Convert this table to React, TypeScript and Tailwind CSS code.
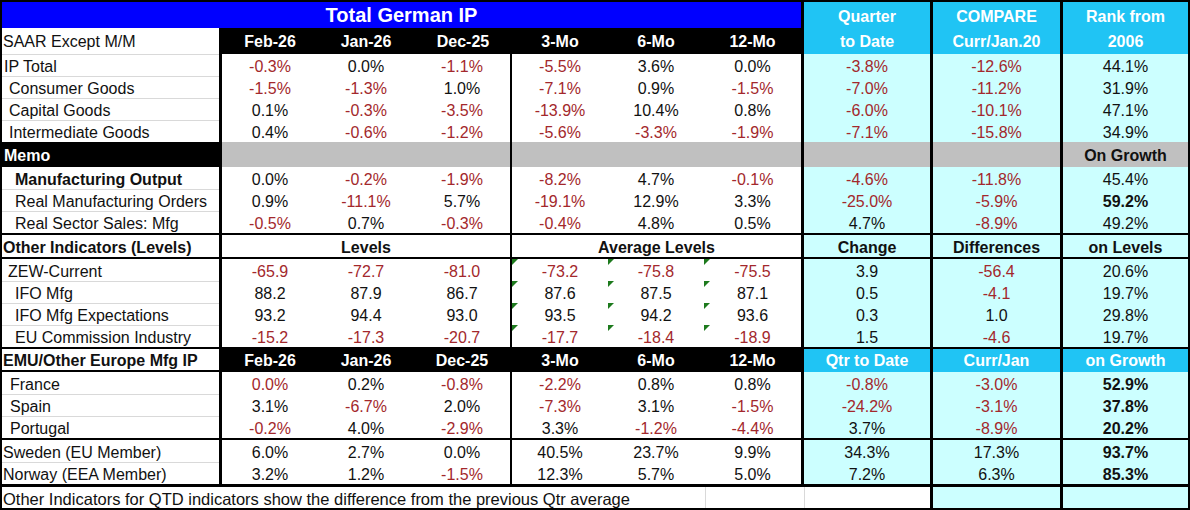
import React from 'react';

type Row = {
  label: string;
  indent: string;
  bold?: boolean;
  vals: string[];
  red?: number[];
  boldRank?: boolean;
  tri?: boolean;
  noTop?: boolean;
};

// column widths; the black rules between column groups are separate elements
const widths = ['w-[96px]', 'w-[96px]', 'w-[96px]', 'w-[96px]', 'w-[96px]', 'w-[97px]', 'w-[126px]', 'w-[127px]', 'w-[125px]'];

const ipRows: Row[] = [
  { label: 'IP Total', indent: 'pl-[2px]', vals: ['-0.3%', '0.0%', '-1.1%', '-5.5%', '3.6%', '0.0%', '-3.8%', '-12.6%', '44.1%'] },
  { label: 'Consumer Goods', indent: 'pl-[7px]', vals: ['-1.5%', '-1.3%', '1.0%', '-7.1%', '0.9%', '-1.5%', '-7.0%', '-11.2%', '31.9%'] },
  { label: 'Capital Goods', indent: 'pl-[7px]', vals: ['0.1%', '-0.3%', '-3.5%', '-13.9%', '10.4%', '0.8%', '-6.0%', '-10.1%', '47.1%'] },
  { label: 'Intermediate Goods', indent: 'pl-[7px]', vals: ['0.4%', '-0.6%', '-1.2%', '-5.6%', '-3.3%', '-1.9%', '-7.1%', '-15.8%', '34.9%'] },
];

const memoRows: Row[] = [
  { label: 'Manufacturing Output', indent: 'pl-[13px]', bold: true, noTop: true, vals: ['0.0%', '-0.2%', '-1.9%', '-8.2%', '4.7%', '-0.1%', '-4.6%', '-11.8%', '45.4%'] },
  { label: 'Real Manufacturing Orders', indent: 'pl-[13px]', boldRank: true, vals: ['0.9%', '-11.1%', '5.7%', '-19.1%', '12.9%', '3.3%', '-25.0%', '-5.9%', '59.2%'] },
  { label: 'Real Sector Sales: Mfg', indent: 'pl-[13px]', vals: ['-0.5%', '0.7%', '-0.3%', '-0.4%', '4.8%', '0.5%', '4.7%', '-8.9%', '49.2%'] },
];

const levelRows: Row[] = [
  { label: 'ZEW-Current', indent: 'pl-[6px]', tri: true, noTop: true, vals: ['-65.9', '-72.7', '-81.0', '-73.2', '-75.8', '-75.5', '3.9', '-56.4', '20.6%'] },
  { label: 'IFO Mfg', indent: 'pl-[13px]', tri: true, vals: ['88.2', '87.9', '86.7', '87.6', '87.5', '87.1', '0.5', '-4.1', '19.7%'] },
  { label: 'IFO Mfg Expectations', indent: 'pl-[13px]', tri: true, vals: ['93.2', '94.4', '93.0', '93.5', '94.2', '93.6', '0.3', '1.0', '29.8%'] },
  { label: 'EU Commission Industry', indent: 'pl-[13px]', tri: true, vals: ['-15.2', '-17.3', '-20.7', '-17.7', '-18.4', '-18.9', '1.5', '-4.6', '19.7%'] },
];

const emuRows: Row[] = [
  { label: 'France', indent: 'pl-[8px]', boldRank: true, noTop: true, red: [0], vals: ['0.0%', '0.2%', '-0.8%', '-2.2%', '0.8%', '0.8%', '-0.8%', '-3.0%', '52.9%'] },
  { label: 'Spain', indent: 'pl-[8px]', boldRank: true, vals: ['3.1%', '-6.7%', '2.0%', '-7.3%', '3.1%', '-1.5%', '-24.2%', '-3.1%', '37.8%'] },
  { label: 'Portugal', indent: 'pl-[8px]', boldRank: true, vals: ['-0.2%', '4.0%', '-2.9%', '3.3%', '-1.2%', '-4.4%', '3.7%', '-8.9%', '20.2%'] },
];

const otherRows: Row[] = [
  { label: 'Sweden (EU Member)', indent: 'pl-[1px]', boldRank: true, noTop: true, vals: ['6.0%', '2.7%', '0.0%', '40.5%', '23.7%', '9.9%', '34.3%', '17.3%', '93.7%'] },
  { label: 'Norway (EEA Member)', indent: 'pl-[1px]', boldRank: true, vals: ['3.2%', '1.2%', '-1.5%', '12.3%', '5.7%', '5.0%', '7.2%', '6.3%', '85.3%'] },
];

const Rule2 = () => <div className="w-[2px] shrink-0 bg-black" />;
const Rule3 = () => <div className="w-[3px] shrink-0 bg-black" />;

// puts the black rules after Dec-25, 12-Mo, QTD and COMPARE
function withRules(cells: React.ReactNode[]) {
  const out: React.ReactNode[] = [];
  cells.forEach((c, i) => {
    out.push(<React.Fragment key={`c${i}`}>{c}</React.Fragment>);
    if (i === 2) out.push(<Rule2 key={`r${i}`} />);
    if (i === 5 || i === 6 || i === 7) out.push(<Rule3 key={`r${i}`} />);
  });
  return out;
}

function DataRow({ row }: { row: Row }) {
  return (
    <div className="flex h-[22px]">
      <div
        className={`w-[217px] shrink-0 flex items-center pt-[3px] whitespace-nowrap ${
          row.noTop ? '' : 'shadow-[inset_0_1px_0_#d9d9d9]'
        } ${row.indent} ${row.bold ? 'font-bold' : ''}`}
      >
        {row.label}
      </div>
      <Rule3 />
      {withRules(
        row.vals.map((v, i) => {
          const red = v.startsWith('-') || (row.red ?? []).includes(i);
          const bold = i === 8 && row.boldRank;
          return (
            <div
              className={`${widths[i]} shrink-0 relative flex items-center justify-center pt-[3px] ${
                i >= 6 ? 'bg-[#ccffff]' : 'bg-white'
              } ${red ? 'text-[#a3282c]' : 'text-[#111]'} ${bold ? 'font-bold' : ''}`}
            >
              {row.tri && i >= 3 && i <= 5 && (
                <span className="absolute left-0 top-0 w-0 h-0 border-t-[6px] border-r-[6px] border-t-[#1d7a1d] border-r-transparent" />
              )}
              {v}
            </div>
          );
        })
      )}
    </div>
  );
}

const periods = ['Feb-26', 'Jan-26', 'Dec-25', '3-Mo', '6-Mo', '12-Mo'];

export default function App() {
  return (
    <div
      className="w-[1190px] h-[510px] bg-white border-2 border-black text-[16px] leading-none text-[#111] overflow-hidden"
      style={{ fontFamily: '"Liberation Sans", Arial, sans-serif' }}
    >
      {/* title + column headers */}
      <div className="flex">
        <div className="w-[799px] shrink-0 flex flex-col">
          <div className="h-[26px] bg-[#0000ff] text-white font-bold text-[20px] flex items-center justify-center">
            Total German IP
          </div>
          <div className="flex h-[26px]">
            <div className="w-[217px] shrink-0 flex items-center pl-[1px] pt-[2px] bg-white">SAAR Except M/M</div>
            <div className="flex-1 flex bg-black text-white font-bold pl-[3px] pt-[2px]">
              {periods.map((p, i) => (
                <div key={p} className={`${i === 5 ? 'w-[97px]' : i === 2 ? 'w-[98px]' : 'w-[96px]'} shrink-0 flex items-center justify-center`}>
                  {p}
                </div>
              ))}
            </div>
          </div>
        </div>
        <Rule3 />
        <div className="w-[126px] shrink-0 bg-[#20c4f4] text-white font-bold flex flex-col pt-[2px]">
          <div className="h-[25px] flex items-center justify-center">Quarter</div>
          <div className="h-[25px] flex items-center justify-center">to Date</div>
        </div>
        <Rule3 />
        <div className="w-[127px] shrink-0 bg-[#20c4f4] text-white font-bold flex flex-col pt-[2px]">
          <div className="h-[25px] flex items-center justify-center">COMPARE</div>
          <div className="h-[25px] flex items-center justify-center">Curr/Jan.20</div>
        </div>
        <Rule3 />
        <div className="w-[125px] shrink-0 bg-[#20c4f4] text-white font-bold flex flex-col pt-[2px]">
          <div className="h-[25px] flex items-center justify-center">Rank from</div>
          <div className="h-[25px] flex items-center justify-center">2006</div>
        </div>
      </div>

      {ipRows.map((r) => (
        <DataRow key={r.label} row={r} />
      ))}

      {/* memo */}
      <div className="flex h-[25px] font-bold">
        <div className="w-[217px] shrink-0 flex items-center pl-[2px] pt-[2px] bg-black text-white">Memo</div>
        <Rule3 />
        <div className="w-[288px] shrink-0 bg-[#c0c0c0]" />
        <Rule2 />
        <div className="w-[289px] shrink-0 bg-[#c0c0c0]" />
        <Rule3 />
        <div className="w-[126px] shrink-0 bg-[#c0c0c0]" />
        <Rule3 />
        <div className="w-[127px] shrink-0 bg-[#c0c0c0]" />
        <Rule3 />
        <div className="w-[125px] shrink-0 bg-[#c0c0c0] flex items-center justify-center pt-[2px]">On Growth</div>
      </div>

      {memoRows.map((r) => (
        <DataRow key={r.label} row={r} />
      ))}

      {/* other indicators */}
      <div className="flex h-[26px] border-y-2 border-black font-bold">
        <div className="w-[217px] shrink-0 flex items-center pl-[1px] pt-[3px]">Other Indicators (Levels)</div>
        <Rule3 />
        <div className="w-[288px] shrink-0 flex items-center justify-center pt-[3px]">Levels</div>
        <Rule2 />
        <div className="w-[289px] shrink-0 flex items-center justify-center pt-[3px]">Average Levels</div>
        <Rule3 />
        <div className="w-[126px] shrink-0 bg-[#ccffff] flex items-center justify-center pt-[3px]">Change</div>
        <Rule3 />
        <div className="w-[127px] shrink-0 bg-[#ccffff] flex items-center justify-center pt-[3px]">Differences</div>
        <Rule3 />
        <div className="w-[125px] shrink-0 bg-[#ccffff] flex items-center justify-center pt-[3px]">on Levels</div>
      </div>

      {levelRows.map((r) => (
        <DataRow key={r.label} row={r} />
      ))}

      {/* EMU header */}
      <div className="flex h-[25px] border-t-2 border-black font-bold">
        <div className="w-[217px] shrink-0 flex items-center pl-[1px] bg-white shadow-[inset_0_-2px_0_#000]">
          EMU/Other Europe Mfg IP
        </div>
        <Rule3 />
        {withRules([
          ...periods.map((p, i) => (
            <div className={`${widths[i]} shrink-0 bg-black text-white flex items-center justify-center`}>{p}</div>
          )),
          <div className="w-[126px] shrink-0 bg-[#20c4f4] text-white flex items-center justify-center">Qtr to Date</div>,
          <div className="w-[127px] shrink-0 bg-[#20c4f4] text-white flex items-center justify-center">Curr/Jan</div>,
          <div className="w-[125px] shrink-0 bg-[#20c4f4] text-white flex items-center justify-center">on Growth</div>,
        ])}
      </div>

      {emuRows.map((r) => (
        <DataRow key={r.label} row={r} />
      ))}

      <div className="border-t-2 border-black">
        {otherRows.map((r) => (
          <DataRow key={r.label} row={r} />
        ))}
      </div>

      {/* footnote */}
      <div className="flex h-[24px] border-t-[3px] border-black">
        <div className="w-[703px] shrink-0 flex items-center pl-[1px] pt-[3px] whitespace-nowrap text-[16.5px]">
          Other Indicators for QTD indicators show the difference from the previous Qtr average
        </div>
        <div className="w-[99px] shrink-0 shadow-[inset_1px_0_0_#d9d9d9]" />
        <div className="w-[126px] shrink-0 bg-white shadow-[inset_1px_0_0_#d9d9d9]" />
        <Rule3 />
        <div className="w-[127px] shrink-0 bg-[#ccffff]" />
        <Rule3 />
        <div className="w-[125px] shrink-0 bg-[#ccffff]" />
      </div>
    </div>
  );
}
